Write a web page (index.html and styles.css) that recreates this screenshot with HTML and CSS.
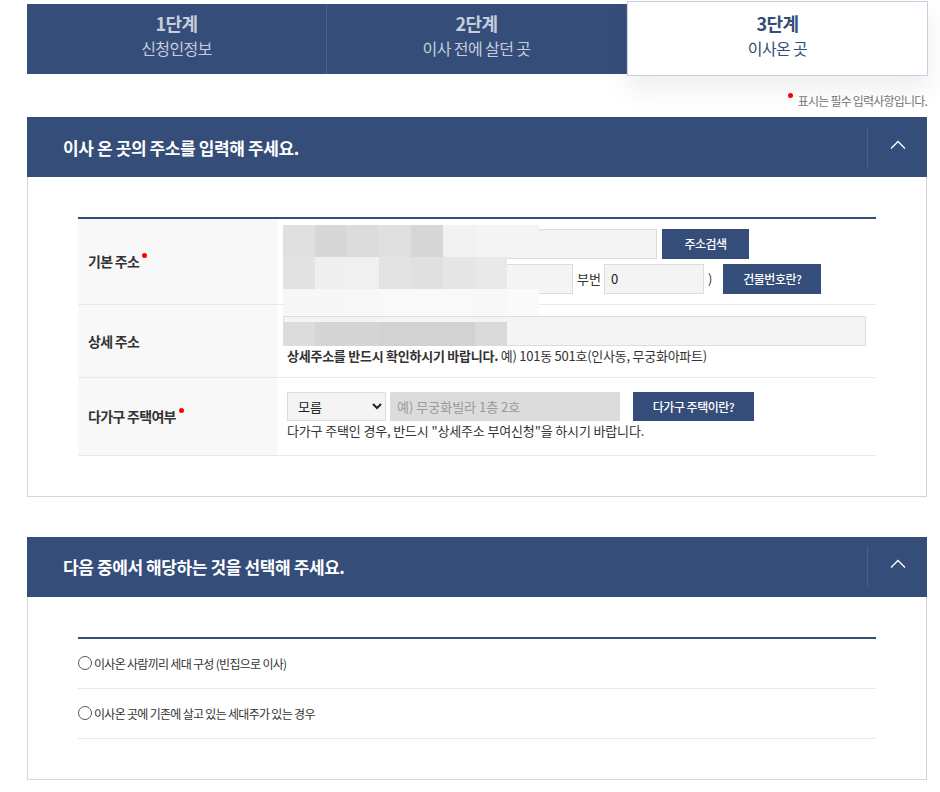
FILE: index.html
```html
<!DOCTYPE html>
<html>
  <head>
    <meta charset="utf-8" />
    <title>전입신고 - 이사온 곳</title>
    <link rel="stylesheet" href="styles.css">
  </head>

  <body>
    <div class="wrap">
      <ul class="steps">
        <li class="step">
          <strong>1단계</strong>
          <span>신청인정보</span>
        </li>
        <li class="step">
          <strong>2단계</strong>
          <span>이사 전에 살던 곳</span>
        </li>
        <li class="step on">
          <strong>3단계</strong>
          <span>이사온 곳</span>
        </li>
      </ul>

      <p class="req_note"><i class="dot"></i>표시는 필수 입력사항입니다.</p>

      <!-- 주소 입력 -->
      <div class="sect">
        <div class="sect_head">
          <h3>이사 온 곳의 주소를 입력해 주세요.</h3>
          <button type="button" class="toggle" title="접기">
            <svg width="16" height="10" viewBox="0 0 16 10">
              <polyline points="1,8.5 8,1.5 15,8.5" fill="none" stroke="#fff" stroke-width="1.3" />
            </svg>
          </button>
        </div>
        <div class="sect_body">
          <table class="tbl">
            <tr class="r1">
              <th>기본 주소<i class="dot"></i></th>
              <td>
                <div class="addr">
                  <div class="line">
                    <input type="text" class="ipt w_addr" />
                    <button type="button" class="btn w_srch">주소검색</button>
                  </div>
                  <div class="line">
                    <input type="text" class="ipt w_bon" />
                    <span class="txt">부번</span>
                    <input type="text" class="ipt w_bu" value="0" />
                    <span class="txt paren">)</span>
                    <button type="button" class="btn w_bldg">건물번호란?</button>
                  </div>
                  <div class="blur blur_a">
                    <i style="background:#e0e0e0"></i><i style="background:#d7d7d7"></i><i style="background:#dcdcdc"></i><i style="background:#e0e0e0"></i><i style="background:#d6d6d6"></i><i style="background:#f2f2f2"></i><i style="background:#f4f4f4"></i><i style="background:#f4f4f4"></i>
                    <i style="background:#e2e2e2"></i><i style="background:#efefef"></i><i style="background:#f0f0f0"></i><i style="background:#e3e3e3"></i><i style="background:#e0e0e0"></i><i style="background:#e6e6e6"></i><i style="background:#e9e9e9"></i><i></i>
                    <i style="background:#f7f7f7"></i><i style="background:#f7f7f7"></i><i style="background:#f8f8f8"></i><i style="background:#f9f9f9"></i><i style="background:#f9f9f9"></i><i style="background:#f9f9f9"></i><i style="background:#f8f8f8"></i><i style="background:#fafafa"></i>
                  </div>
                </div>
              </td>
            </tr>
            <tr class="r2">
              <th>상세 주소</th>
              <td>
                <div class="addr">
                  <input type="text" class="ipt w_dtl" />
                  <p class="desc"><b>상세주소를 반드시 확인하시기 바랍니다.</b> 예) 101동 501호(인사동, 무궁화아파트)</p>
                  <div class="blur blur_b">
                    <i style="background:#dcdcdc"></i><i style="background:#d5d5d5"></i><i style="background:#d5d5d5"></i><i style="background:#d2d2d2"></i><i style="background:#d2d2d2"></i><i style="background:#d2d2d2"></i><i style="background:#dadada"></i>
                  </div>
                </div>
              </td>
            </tr>
            <tr class="r3">
              <th>다가구 주택여부<i class="dot"></i></th>
              <td>
                <div class="line">
                  <select class="sel">
                    <option>모름</option>
                    <option>예</option>
                    <option>아니오</option>
                  </select>
                  <input type="text" class="ipt ipt_dis w_multi" placeholder="예) 무궁화빌라 1층 2호" />
                  <button type="button" class="btn w_multi_btn">다가구 주택이란?</button>
                </div>
                <p class="desc">다가구 주택인 경우, 반드시 "상세주소 부여신청"을 하시기 바랍니다.</p>
              </td>
            </tr>
          </table>
        </div>
      </div>

      <!-- 세대 구성 선택 -->
      <div class="sect">
        <div class="sect_head">
          <h3>다음 중에서 해당하는 것을 선택해 주세요.</h3>
          <button type="button" class="toggle" title="접기">
            <svg width="16" height="10" viewBox="0 0 16 10">
              <polyline points="1,8.5 8,1.5 15,8.5" fill="none" stroke="#fff" stroke-width="1.3" />
            </svg>
          </button>
        </div>
        <div class="sect_body">
          <ul class="choice">
            <li><label><i class="radio"></i>이사온 사람끼리 세대 구성 (빈집으로 이사)</label></li>
            <li><label><i class="radio"></i>이사온 곳에 기존에 살고 있는 세대주가 있는 경우</label></li>
          </ul>
        </div>
      </div>
    </div>
  </body>
</html>
```

FILE: styles.css
```css
* {
  box-sizing: border-box;
}
body {
  margin: 0;
  font-family: "Noto Sans CJK KR", "Noto Sans", sans-serif;
  color: #333;
  background: #fff;
}
ul,
p,
h3 {
  margin: 0;
  padding: 0;
  list-style: none;
}
.wrap {
  width: 900px;
  margin: 0 0 0 27px;
}

/* 단계 탭 */
.steps {
  display: flex;
  margin-top: 4px;
  height: 70px;
  background: #344d79;
}
.step {
  flex: 1;
  display: flex;
  flex-direction: column;
  align-items: center;
  padding-top: 6px;
  color: #c6cedd;
  border-right: 1px solid #4a6189;
  letter-spacing: -0.6px;
}
.step strong {
  font-size: 18px;
  line-height: 26px;
}
.step span {
  font-size: 16px;
  line-height: 24px;
}
.step.on {
  margin: -3px -1px -2px 0;
  padding-top: 8px;
  background: #fff;
  color: #344d79;
  border: 1px solid #c8cfdf;
  box-shadow: 0 12px 24px rgba(40, 50, 80, 0.09);
  position: relative;
  z-index: 1;
}

.req_note {
  padding: 17px 0 7px;
  text-align: right;
  font-size: 12px;
  color: #777;
  letter-spacing: -0.8px;
  line-height: 19px;
}
.dot {
  display: inline-block;
  width: 5px;
  height: 5px;
  margin: 0 5px 0 3px;
  border-radius: 50%;
  background: #f00;
  vertical-align: 9px;
}
.req_note .dot {
  margin: 0 5px 0 0;
  vertical-align: 8px;
}

/* 섹션 */
.sect + .sect {
  margin-top: 40px;
}
.sect_head {
  display: flex;
  align-items: center;
  height: 60px;
  padding-left: 36px;
  background: #344d79;
}
.sect_head h3 {
  flex: 1;
  font-size: 17px;
  color: #fff;
  letter-spacing: -0.4px;
}
.toggle {
  width: 60px;
  height: 40px;
  padding: 0 0 4px;
  border: 0;
  border-left: 1px solid #4a6189;
  background: none;
}
.sect_body {
  padding: 40px 50px 40px;
  border: 1px solid #d5d5d5;
  border-top: 0;
}

/* 입력표 */
.tbl {
  width: 100%;
  border-collapse: collapse;
  border-top: 2px solid #344d79;
  font-size: 13px;
}
.tbl th,
.tbl td {
  border-bottom: 1px solid #e8e8e8;
  vertical-align: middle;
  text-align: left;
}
.tbl th {
  width: 199px;
  padding: 0 10px;
  background: #f8f8f8;
  font-size: 14px;
  color: #333;
  letter-spacing: -0.7px;
}
.tbl td {
  padding: 0 6px;
}
.r1 {
  height: 86px;
}
.r2 {
  height: 73px;
}
.r3 {
  height: 78px;
}
.r3 td {
  padding-left: 10px;
}
.addr {
  position: relative;
}
.line {
  display: flex;
  align-items: center;
}
.line + .line {
  margin-top: 5px;
}
.ipt {
  height: 30px;
  padding: 0 6px;
  border: 1px solid #dcdcdc;
  background: #f4f4f4;
  font: 13px "Noto Sans CJK KR", sans-serif;
  color: #222;
}
.ipt_dis {
  background: #dcdcdc;
  border-color: #dcdcdc;
  height: 29px;
}
.ipt_dis::placeholder {
  color: #999;
}
.txt {
  font-size: 13px;
  color: #333;
  margin: 0 3px 0 4px;
}
.paren {
  margin: 0 11px 0 4px;
}
.w_addr {
  width: 374px;
}
.w_bon {
  width: 290px;
}
.w_bu {
  width: 100px;
}
.w_dtl {
  width: 583px;
  display: block;
}
.btn {
  height: 30px;
  border: 0;
  background: #344d79;
  color: #fff;
  font: 500 12px "Noto Sans CJK KR", sans-serif;
  letter-spacing: -0.5px;
  cursor: pointer;
}
.w_srch {
  width: 87px;
  margin-left: 5px;
}
.w_bldg {
  width: 98px;
}
.sel {
  width: 99px;
  height: 29px;
  padding: 0 6px;
  border: 1px solid #dcdcdc;
  background: #f4f4f4;
  font: 13px "Noto Sans CJK KR", sans-serif;
  color: #222;
}
.w_multi {
  width: 230px;
  margin-left: 4px;
}
.w_multi_btn {
  width: 121px;
  height: 29px;
  margin-left: 13px;
}
.desc {
  font-size: 13px;
  line-height: 20px;
  color: #333;
  letter-spacing: -0.15px;
}
.r2 .desc {
  margin-left: 4px;
  letter-spacing: -0.25px;
}
.desc b {
  font-weight: 700;
}

/* 가림 처리 */
.blur {
  position: absolute;
  left: 0;
  display: grid;
  grid-template-columns: repeat(8, 32px);
  grid-auto-rows: 32px;
}
.blur i {
  display: block;
}
.blur_a {
  top: -4px;
}
.blur_b {
  top: 6px;
  grid-auto-rows: 24px;
}

/* 선택 목록 */
.choice {
  border-top: 2px solid #344d79;
}
.choice li {
  height: 50px;
  display: flex;
  align-items: center;
  border-bottom: 1px solid #e8e8e8;
  font-size: 12px;
  color: #333;
  letter-spacing: -0.7px;
}
.choice label {
  display: flex;
  align-items: center;
}
.radio {
  width: 14px;
  height: 14px;
  margin-right: 2px;
  border: 1px solid #555;
  border-radius: 50%;
}
```
